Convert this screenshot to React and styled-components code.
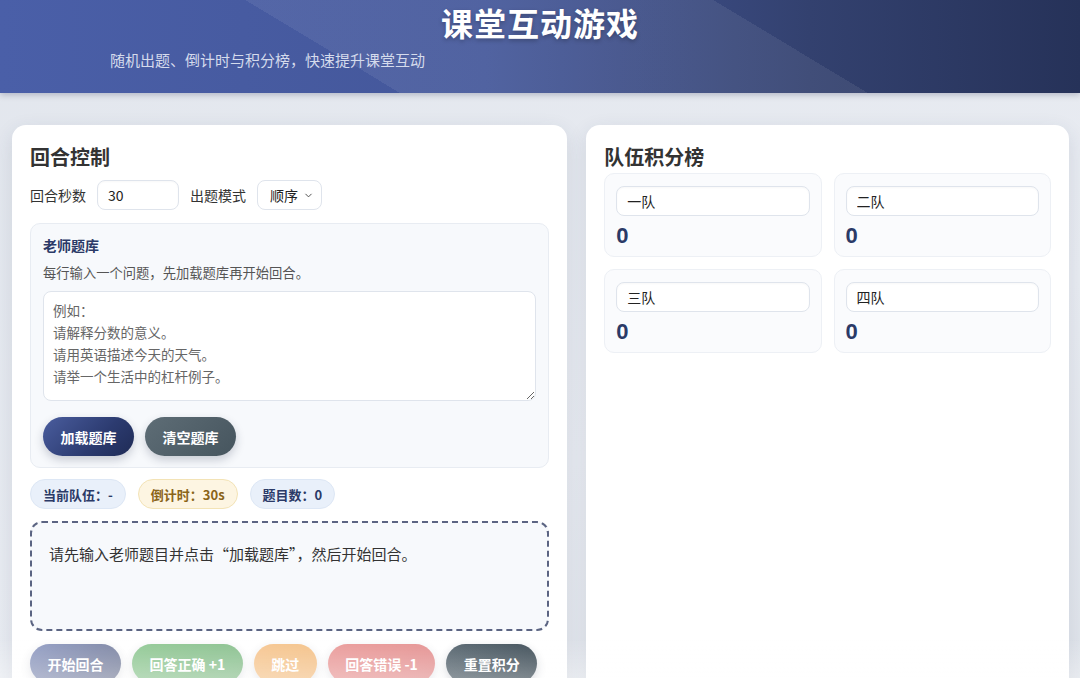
import styled, { createGlobalStyle } from 'styled-components';
import { ChevronDown } from 'lucide-react';

const GlobalStyle = createGlobalStyle`
	* { box-sizing: border-box; }
	body {
		margin: 0;
		font-family: "Noto Sans CJK SC", "Noto Sans", "Liberation Sans", sans-serif;
		color: #333;
		background: linear-gradient(160deg, #e2e6ed 0%, #e9ecf2 60%, #dfe3ea 100%);
		min-height: 100vh;
		overflow: hidden;
	}
`;

const Header = styled.header`
	height: 93px;
	background:
		linear-gradient(31deg, transparent 206px, rgba(255, 255, 255, 0.07) 206px, rgba(255, 255, 255, 0.07) 447px, transparent 447px),
		linear-gradient(90deg, #4a5fa8 0%, #44579a 45%, #33416f 75%, #263259 100%);
	box-shadow: 0 2px 6px rgba(30, 40, 80, 0.25);
	color: #fff;
`;

const HeaderInner = styled.div`
	max-width: 860px;
	margin: 0 auto;
	padding-top: 3px;
`;

const Title = styled.h1`
	margin: 0;
	text-align: center;
	font-size: 32px;
	line-height: 38px;
	font-weight: 700;
	letter-spacing: 1px;
	text-shadow: 0 2px 4px rgba(0, 0, 0, 0.25);
`;

const Subtitle = styled.p`
	margin: 9px 0 0;
	font-size: 15px;
	line-height: 20px;
	color: #d5dbec;
`;

const Main = styled.main`
	display: grid;
	grid-template-columns: 1.15fr 1fr;
	gap: 19px;
	padding: 32px 11px 0 12px;
	align-items: start;
`;

const Card = styled.section`
	background: #fff;
	border-radius: 14px;
	box-shadow: 0 6px 20px rgba(40, 55, 90, 0.12);
	padding: 18px 18px 24px;
	min-height: 600px;
	display: flex;
	flex-direction: column;
`;

const CardTitle = styled.h2`
	margin: 0 0 ${(p) => p.$gap}px;
	font-size: 20px;
	line-height: 28px;
	font-weight: 700;
	color: #333;
`;

const Row = styled.div`
	display: flex;
	align-items: center;
	gap: 11px;
	font-size: 14px;
	color: #333;
`;

const Input = styled.input`
	height: 30px;
	width: ${(p) => p.$w || '100%'};
	border: 1px solid #dfe4ec;
	border-radius: 8px;
	background: #fff;
	padding: 0 10px;
	font: inherit;
	font-size: 14px;
	color: #222;
	outline: none;
	box-shadow: inset 0 1px 2px rgba(0, 0, 0, 0.03);
`;

const SelectWrap = styled.div`
	position: relative;
	width: 65px;
	height: 30px;
	svg {
		position: absolute;
		right: 8px;
		top: 10px;
		pointer-events: none;
		color: #444;
	}
`;

const Select = styled.select`
	appearance: none;
	width: 100%;
	height: 100%;
	border: 1px solid #dfe4ec;
	border-radius: 8px;
	background: #fff;
	padding: 0 0 0 12px;
	font: inherit;
	font-size: 14px;
	color: #222;
	outline: none;
`;

const Bank = styled.div`
	margin-top: 13px;
	background: #f7f9fc;
	border: 1px solid #e8ecf2;
	border-radius: 10px;
	padding: 11px 12px 11px;
	display: flex;
	flex-direction: column;
`;

const BankTitle = styled.div`
	font-size: 14px;
	line-height: 20px;
	font-weight: 700;
	color: #2b3a67;
`;

const BankDesc = styled.div`
	margin-top: 9px;
	font-size: 13.3px;
	line-height: 18px;
	color: #555;
`;

const TextArea = styled.textarea`
	margin-top: 9px;
	height: 110px;
	width: 100%;
	border: 1px solid #dfe4ec;
	border-radius: 8px;
	background: #fff;
	padding: 7px 9px;
	font: inherit;
	font-size: 13.5px;
	line-height: 22px;
	resize: vertical;
	outline: none;
	&::placeholder { color: #666; }
`;

const ButtonRow = styled.div`
	display: flex;
	gap: 11px;
	margin-top: ${(p) => p.$mt || 0}px;
`;

const variants = {
	primary: 'linear-gradient(135deg, #4a5d9e 0%, #2c3b70 60%, #1f2b55 100%)',
	slate: 'linear-gradient(135deg, #5e6d76 0%, #46555e 100%)',
	green: 'linear-gradient(135deg, #4aa650 0%, #3b9442 100%)',
	orange: 'linear-gradient(135deg, #f2a248 0%, #ec9636 100%)',
	red: 'linear-gradient(135deg, #de5a58 0%, #d04646 100%)',
	dark: 'linear-gradient(135deg, #56656f 0%, #36454f 100%)'
};

const Button = styled.button`
	height: 39px;
	padding: 0 17.5px;
	border: none;
	border-radius: 20px;
	background: ${(p) => variants[p.$tone]};
	color: #fff;
	font: inherit;
	font-size: 14px;
	font-weight: 700;
	white-space: nowrap;
	box-shadow: 0 4px 10px rgba(30, 40, 70, 0.22);
	opacity: ${(p) => (p.disabled ? 0.6 : 1)};
	cursor: pointer;
`;

const Badges = styled.div`
	display: flex;
	gap: 12px;
	margin-top: 11px;
`;

const Badge = styled.span`
	height: 30px;
	display: inline-flex;
	align-items: center;
	padding: 0 12px;
	border-radius: 15px;
	font-size: 13px;
	font-weight: 700;
	background: ${(p) => (p.$warm ? '#fdf5e2' : '#e9f0fa')};
	border: 1px solid ${(p) => (p.$warm ? '#f3e3b6' : '#dde7f5')};
	color: ${(p) => (p.$warm ? '#8a6418' : '#2b3a67')};
`;

const Question = styled.div`
	margin-top: 12px;
	height: 110px;
	border: 2px dashed #5b6482;
	border-radius: 12px;
	background: #f7f9fc;
	padding: 19px 17px;
	font-size: 15px;
	line-height: 24px;
	color: #333;
`;

const TeamGrid = styled.div`
	display: grid;
	grid-template-columns: 1fr 1fr;
	gap: 12px;
`;

const TeamCard = styled.div`
	background: #fafbfd;
	border: 1px solid #edf0f5;
	border-radius: 10px;
	padding: 12px 11px 8px;
	height: 84px;
`;

const Score = styled.div`
	margin-top: 7px;
	font-size: 22px;
	line-height: 26px;
	font-weight: 800;
	color: #2b3a67;
	font-family: "Liberation Sans", "Noto Sans", sans-serif;
`;

const Fade = styled.div`
	position: fixed;
	left: 0;
	right: 0;
	bottom: 0;
	height: 40px;
	pointer-events: none;
	background: linear-gradient(180deg, rgba(255, 255, 255, 0) 0%, rgba(255, 255, 255, 0.35) 100%);
`;

const teams = ['一队', '二队', '三队', '四队'];

const placeholder = '例如：\n请解释分数的意义。\n请用英语描述今天的天气。\n请举一个生活中的杠杆例子。';

export default function App() {
	return (
		<>
			<GlobalStyle />
			<Header>
				<HeaderInner>
					<Title>课堂互动游戏</Title>
					<Subtitle>随机出题、倒计时与积分榜，快速提升课堂互动</Subtitle>
				</HeaderInner>
			</Header>
			<Main>
				<Card>
					<CardTitle $gap={9}>回合控制</CardTitle>
					<Row>
						<span>回合秒数</span>
						<Input $w='82px' defaultValue='30' />
						<span>出题模式</span>
						<SelectWrap>
							<Select defaultValue='seq'>
								<option value='seq'>顺序</option>
								<option value='rand'>随机</option>
							</Select>
							<ChevronDown size={11} strokeWidth={2} />
						</SelectWrap>
					</Row>
					<Bank>
						<BankTitle>老师题库</BankTitle>
						<BankDesc>每行输入一个问题，先加载题库再开始回合。</BankDesc>
						<TextArea placeholder={placeholder} />
						<ButtonRow $mt={16}>
							<Button $tone='primary'>加载题库</Button>
							<Button $tone='slate'>清空题库</Button>
						</ButtonRow>
					</Bank>
					<Badges>
						<Badge>当前队伍：-</Badge>
						<Badge $warm>倒计时：30s</Badge>
						<Badge>题目数：0</Badge>
					</Badges>
					<Question>请先输入老师题目并点击“加载题库”，然后开始回合。</Question>
					<ButtonRow $mt={13}>
						<Button $tone='primary' disabled>开始回合</Button>
						<Button $tone='green' disabled>回答正确 +1</Button>
						<Button $tone='orange' disabled>跳过</Button>
						<Button $tone='red' disabled>回答错误 -1</Button>
						<Button $tone='dark'>重置积分</Button>
					</ButtonRow>
				</Card>
				<Card>
					<CardTitle $gap={2}>队伍积分榜</CardTitle>
					<TeamGrid>
						{teams.map((t) => (
							<TeamCard key={t}>
								<Input defaultValue={t} />
								<Score>0</Score>
							</TeamCard>
						))}
					</TeamGrid>
				</Card>
			</Main>
			<Fade />
		</>
	);
}
